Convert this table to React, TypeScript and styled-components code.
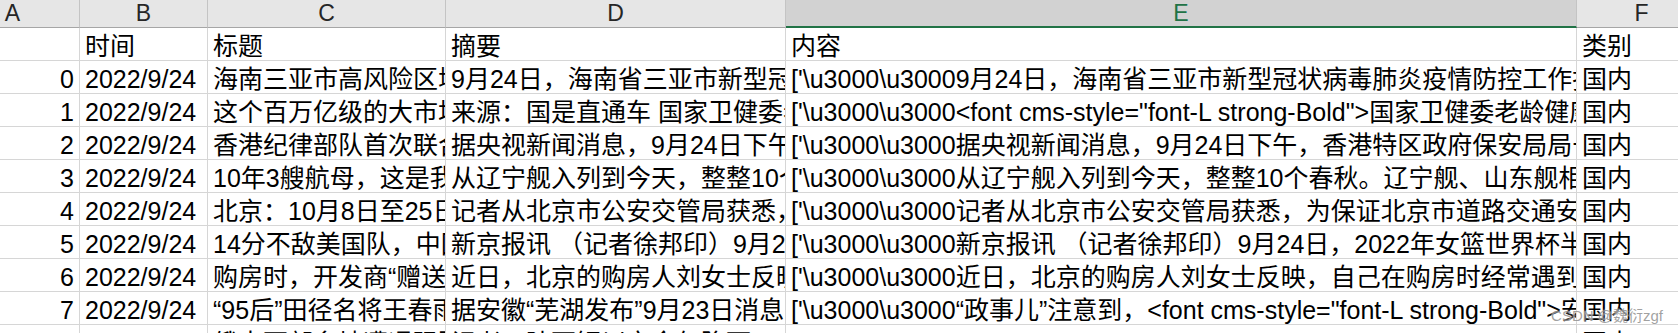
import React from "react";
import styled, { createGlobalStyle } from "styled-components";

const columns = [
    { key: "A", width: 134 },
    { key: "B", width: 128 },
    { key: "C", width: 238 },
    { key: "D", width: 340 },
    { key: "E", width: 791 },
    { key: "F", width: 130 },
];

const selectedColumn = "E";

const rows: Array<Array<string>> = [
    ["", "时间", "标题", "摘要", "内容", "类别"],
    ["0", "2022/9/24", "海南三亚市高风险区增至", "9月24日，海南省三亚市新型冠状病毒", "['\\u3000\\u30009月24日，海南省三亚市新型冠状病毒肺炎疫情防控工作指挥部", "国内"],
    ["1", "2022/9/24", "这个百万亿级的大市场", "来源：国是直通车 国家卫健委老龄健康司", "['\\u3000\\u3000<font cms-style=\"font-L strong-Bold\">国家卫健委老龄健康司", "国内"],
    ["2", "2022/9/24", "香港纪律部队首次联合", "据央视新闻消息，9月24日下午", "['\\u3000\\u3000据央视新闻消息，9月24日下午，香港特区政府保安局局长邓炳强", "国内"],
    ["3", "2022/9/24", "10年3艘航母，这是我们", "从辽宁舰入列到今天，整整10个春秋", "['\\u3000\\u3000从辽宁舰入列到今天，整整10个春秋。辽宁舰、山东舰相继入列", "国内"],
    ["4", "2022/9/24", "北京：10月8日至25日", "记者从北京市公安交管局获悉，为保证", "['\\u3000\\u3000记者从北京市公安交管局获悉，为保证北京市道路交通安全", "国内"],
    ["5", "2022/9/24", "14分不敌美国队，中国女篮", "新京报讯 （记者徐邦印）9月24日", "['\\u3000\\u3000新京报讯 （记者徐邦印）9月24日，2022年女篮世界杯半决赛", "国内"],
    ["6", "2022/9/24", "购房时，开发商“赠送”", "近日，北京的购房人刘女士反映", "['\\u3000\\u3000近日，北京的购房人刘女士反映，自己在购房时经常遇到", "国内"],
    ["7", "2022/9/24", "“95后”田径名将王春雨", "据安徽“芜湖发布”9月23日消息", "['\\u3000\\u3000“政事儿”注意到，<font cms-style=\"font-L strong-Bold\">安徽省委", "国内"],
    ["8", "2022/9/24", "俄中西部多地遭遇强降雨", "记者：陕西铜川市今年降雨", "", "国内"],
];

const GlobalStyle = createGlobalStyle`
    html, body {
        margin: 0;
        padding: 0;
        background: #ffffff;
        overflow: hidden;
    }
`;

const App = () => {
    return (
        <>
            <GlobalStyle />
            <Viewport>
                <Sheet $template={columns.map((c) => c.width + "px").join(" ")}>
                    {columns.map((col) => (
                        <ColumnHeader key={col.key} $selected={col.key === selectedColumn}>
                            {col.key}
                        </ColumnHeader>
                    ))}

                    {rows.map((row, r) =>
                        row.map((value, c) => (
                            <Cell key={r + "-" + c} $numeric={c === 0}>
                                {value}
                            </Cell>
                        ))
                    )}
                </Sheet>

                <Watermark>CSDN @魏衍zgf</Watermark>
            </Viewport>
        </>
    );
};

const Viewport = styled.div`
    position: relative;
    width: 1678px;
    height: 333px;
    overflow: hidden;
    background: #ffffff;
`;

const Sheet = styled.div<{ $template: string }>`
    display: grid;
    grid-template-columns: ${(p) => p.$template};
    width: max-content;
    margin-left: -54px;

    font-family: "Liberation Sans", "Noto Sans CJK SC", sans-serif;
    color: #000000;
`;

const ColumnHeader = styled.div<{ $selected: boolean }>`
    box-sizing: border-box;
    height: 28px;

    background: ${(p) => (p.$selected ? "#d2d2d2" : "#e6e6e6")};
    border-bottom: ${(p) => (p.$selected ? "2px solid #217346" : "1px solid #a6a6a6")};
    border-right: 1px solid #c4c4c4;
    color: ${(p) => (p.$selected ? "#217346" : "#262626")};

    font-size: 23px;
    line-height: 27px;
    text-align: center;
`;

const Cell = styled.div<{ $numeric: boolean }>`
    box-sizing: border-box;
    height: 33px;
    padding: 4px 5px 0 5px;

    border-bottom: 1px solid #d6d6d6;
    border-right: 1px solid #d6d6d6;

    font-size: 25px;
    line-height: 28px;
    overflow: hidden;
    text-align: ${(p) => (p.$numeric ? "right" : "left")};
    white-space: nowrap;
`;

const Watermark = styled.div`
    position: absolute;
    right: 15px;
    bottom: 9px;

    color: rgba(130, 130, 130, 0.75);
    font-family: "Liberation Sans", "Noto Sans CJK SC", sans-serif;
    font-size: 15px;
    line-height: 16px;
    text-shadow: 0 0 2px #ffffff;
    white-space: nowrap;
    pointer-events: none;
`;

export default App;
